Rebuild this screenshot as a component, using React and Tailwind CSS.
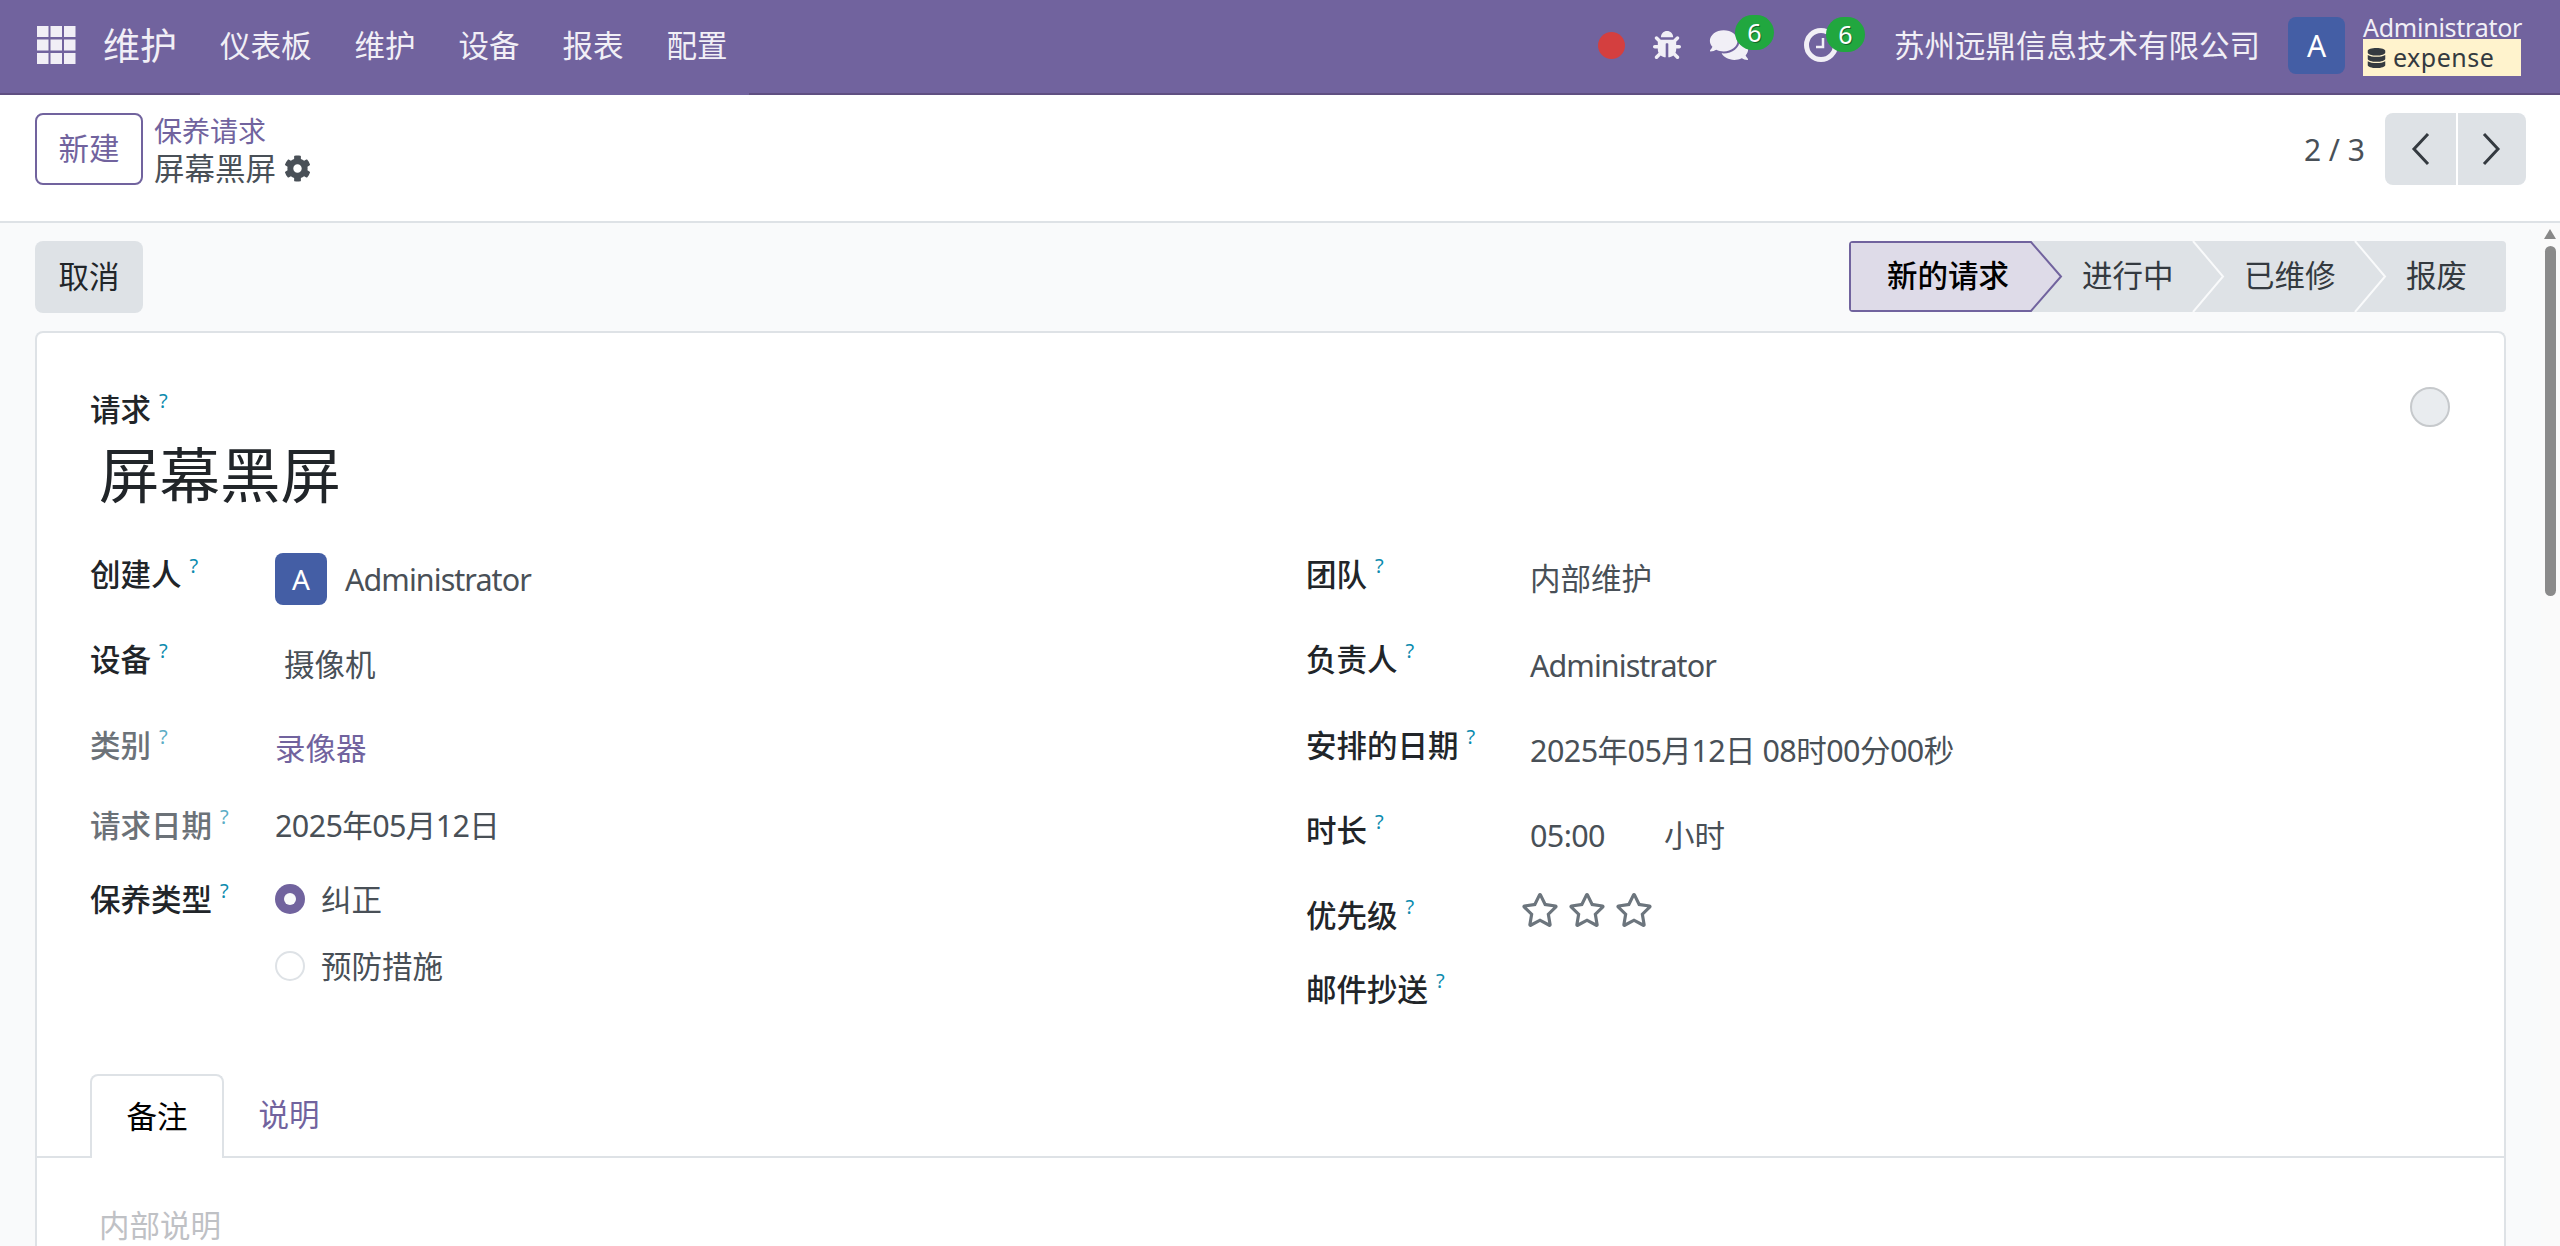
import React from "react";
import { FaBug, FaComments, FaCog, FaDatabase, FaRegStar } from "react-icons/fa";

function Q({ muted }) {
  return <sup className={`relative top-[-13px] ml-[8px] align-baseline text-[20px] font-normal leading-none ${muted ? "text-[#5cadc6]" : "text-[#0c8bae]"}`}>?</sup>;
}

function Label({ children, muted, w }) {
  return (
    <div className={`h-[40px] whitespace-nowrap text-[30.5px] font-medium leading-[40px] ${muted ? "text-[#6c7278]" : "text-[#212529]"} ${w || "w-[185px]"}`}>
      {children}
      <Q muted={muted} />
    </div>
  );
}

function Grid() {
  return (
    <svg width="39" height="38" viewBox="0 0 39 38" fill="#f1eff6" className="mr-[27px]">
      {[0, 13.5, 27].map((y) => [0, 13.5, 27].map((x) => <rect key={x + "-" + y} x={x} y={y} width="11.5" height="11" />))}
    </svg>
  );
}

function Badge({ className }) {
  return (
    <span className={`absolute flex h-[35px] w-[39px] items-center justify-center rounded-full bg-[#21a73f] text-[25px] text-white [text-shadow:1px_1px_0_#14682a] ${className}`}>6</span>
  );
}

function Step({ label, active, width, padLeft }) {
  return (
    <div className={`relative h-full ${width} ${padLeft} text-[30.5px] leading-[69px] ${active ? "font-medium text-black" : "text-[#343a40]"}`}>
      {label}
    </div>
  );
}

const value = "text-[30.5px] leading-[40px]";

export default function App() {
  return (
    <div className="relative flex h-[1246px] w-[2560px] flex-col overflow-hidden bg-[#f9fafb] font-['Noto_Sans','Noto_Sans_CJK_SC',sans-serif] text-[#495057]">
      {/* top bar */}
      <header className="relative flex h-[95px] w-full shrink-0 items-center border-b-[2px] border-[#5f4f81] bg-[#71639e] pb-[3px] pl-[37px] pr-[39px] text-[#f1eff6]">
        <span className="absolute bottom-[-2px] left-[200px] h-[2px] w-[549px] bg-[#71639e]" />
        <Grid />
        <span className="mr-[43px] text-[37px] leading-none">维护</span>
        <nav className="flex gap-[43px] text-[30.5px] leading-none">
          <span>仪表板</span>
          <span>维护</span>
          <span>设备</span>
          <span>报表</span>
          <span>配置</span>
        </nav>
        <div className="ml-auto flex items-center">
          <span className="mr-[28px] h-[27px] w-[27px] rounded-full bg-[#d43f3f]" />
          <FaBug className="mr-[28px] h-[28px] w-[28px] text-[#f1eff6]" />
          <div className="relative mr-[55px] h-[34px] w-[40px]">
            <FaComments className="h-[34px] w-[40px]" />
            <Badge className="left-[26px] top-[-13px]" />
          </div>
          <div className="relative mr-[56px] h-[34px] w-[34px]">
            <svg width="34" height="34" viewBox="0 0 34 34" fill="none" stroke="#f1eff6">
              <circle cx="17" cy="17" r="14.5" strokeWidth="5" />
              <path d="M19 10v9h-7" strokeWidth="2.5" />
            </svg>
            <Badge className="left-[22px] top-[-11px]" />
          </div>
          <span className="mr-[28px] text-[30.5px] leading-none">苏州远鼎信息技术有限公司</span>
          <span className="mr-[18px] flex h-[57px] w-[57px] items-center justify-center rounded-[8px] bg-[#445ea5] text-[30px] text-white">A</span>
          <div className="flex w-[158px] flex-col pt-[1px]">
            <span className="text-[25px] leading-[24px] tracking-[-0.25px]">Administrator</span>
            <span className="flex h-[37px] items-center bg-[#fff3cd] pl-[4px] text-[25px] leading-none tracking-[0.5px] text-[#343a40]">
              <FaDatabase className="mr-[7px] h-[20px] w-[19px]" />
              expense
            </span>
          </div>
        </div>
      </header>

      {/* control panel */}
      <div className="flex h-[128px] w-full shrink-0 items-start border-b-[2px] border-[#dee2e6] bg-white pl-[35px] pr-[34px] pt-[18px]">
        <button className="h-[72px] w-[108px] rounded-[8px] border-[2px] border-[#71639e] text-[30.5px] text-[#71639e]">新建</button>
        <div className="ml-[11px] flex flex-col">
          <span className="h-[36px] text-[28px] leading-[36px] text-[#71639e]">保养请求</span>
          <span className="flex h-[38px] items-center text-[30.5px] leading-[38px] text-[#495057]">
            屏幕黑屏
            <FaCog className="ml-[8px] h-[27px] w-[27px] text-[#495057]" />
          </span>
        </div>
        <div className="ml-auto flex items-center">
          <span className="mr-[20px] text-[30px] text-[#495057]">2 / 3</span>
          <div className="flex h-[72px] overflow-hidden rounded-[8px]">
            <button className="flex h-full w-[71px] items-center justify-center bg-[#dee2e6]">
              <svg width="20" height="34" viewBox="0 0 20 34" fill="none" stroke="#343a40" strokeWidth="3"><path d="M17 2 3 17l14 15" /></svg>
            </button>
            <button className="ml-[2px] flex h-full w-[68px] items-center justify-center bg-[#dee2e6]">
              <svg width="20" height="34" viewBox="0 0 20 34" fill="none" stroke="#343a40" strokeWidth="3"><path d="m2 2 14 15L2 32" /></svg>
            </button>
          </div>
        </div>
      </div>

      {/* content */}
      <div className="flex min-h-0 flex-1 flex-col pl-[35px] pr-[54px] pt-[18px]">
        <div className="flex h-[72px] shrink-0 items-start justify-between">
          <button className="h-[72px] w-[108px] rounded-[8px] bg-[#dee2e6] text-[30.5px] text-[#212529]">取消</button>
          <div className="relative flex h-[71px] w-[657px] overflow-hidden rounded-[4px] bg-[#dee2e6]">
            <svg className="absolute left-0 top-0" width="657" height="71" viewBox="0 0 657 71" fill="none">
              <path d="M1 1H182L212 35.5 182 70H1Z" fill="#dedbe8" stroke="#71639e" strokeWidth="2" />
              <path d="M344 0 374 35.5 344 71" stroke="#f9fafb" strokeWidth="2" />
              <path d="M506 0 536 35.5 506 71" stroke="#f9fafb" strokeWidth="2" />
            </svg>
            <Step label="新的请求" active width="w-[231px]" padLeft="pl-[38px]" />
            <Step label="进行中" width="w-[164px]" padLeft="pl-[2px]" />
            <Step label="已维修" width="w-[162px]" padLeft="pl-[0px]" />
            <Step label="报废" width="w-[100px]" padLeft="pl-[0px]" />
          </div>
        </div>

        <div className="relative mt-[18px] flex flex-1 flex-col rounded-t-[8px] border-[2px] border-b-0 border-[#dee2e6] bg-white pt-[56px]">
          <span className="absolute right-[54px] top-[54px] h-[40px] w-[40px] rounded-full border-[2px] border-[#c6c9cc] bg-[#e9ecef]" />
          <div className="pl-[53px]">
            <Label>请求</Label>
            <div className="ml-[9px] mt-[10px] text-[60.5px] leading-[72px] text-[#212529]">屏幕黑屏</div>
          </div>

          <div className="mt-[43px] flex pl-[53px]">
            <div className="flex w-[1216px] flex-col">
              <div className="flex h-[85px]">
                <Label>创建人</Label>
                <div className="flex items-start">
                  <span className="mt-[-1px] flex h-[52px] w-[52px] items-center justify-center rounded-[8px] bg-[#445ea5] text-[28px] text-white">A</span>
                  <span className={`ml-[18px] mt-[5px] ${value} tracking-[-0.95px]`}>Administrator</span>
                </div>
              </div>
              <div className="flex h-[86px]">
                <Label>设备</Label>
                <span className={`ml-[9px] mt-[5px] ${value}`}>摄像机</span>
              </div>
              <div className="flex h-[80px]">
                <Label muted>类别</Label>
                <span className={`mt-[3px] ${value} text-[#71639e]`}>录像器</span>
              </div>
              <div className="flex h-[74px]">
                <Label muted>请求日期</Label>
                <span className={`${value} tracking-[-0.62px]`}>2025年05月12日</span>
              </div>
              <div className="flex h-[67px]">
                <Label>保养类型</Label>
                <div className="flex items-center self-start">
                  <span className="flex h-[30px] w-[30px] items-center justify-center rounded-full bg-[#71639e]">
                    <span className="h-[12px] w-[12px] rounded-full bg-[#f9fafb]" />
                  </span>
                  <span className={`ml-[16px] ${value}`}>纠正</span>
                </div>
              </div>
              <div className="flex">
                <div className="w-[185px]" />
                <div className="flex items-center">
                  <span className="h-[30px] w-[30px] rounded-full border-[2px] border-[#dee2e6]" />
                  <span className={`ml-[16px] ${value}`}>预防措施</span>
                </div>
              </div>
            </div>

            <div className="flex flex-col">
              <div className="flex h-[85px]">
                <Label w="w-[224px]">团队</Label>
                <span className={`mt-[4px] ${value}`}>内部维护</span>
              </div>
              <div className="flex h-[86px]">
                <Label w="w-[224px]">负责人</Label>
                <span className={`mt-[6px] ${value} tracking-[-0.95px]`}>Administrator</span>
              </div>
              <div className="flex h-[85px]">
                <Label w="w-[224px]">安排的日期</Label>
                <span className={`mt-[5px] ${value} tracking-[-0.55px]`}>2025年05月12日 08时00分00秒</span>
              </div>
              <div className="flex h-[85px]">
                <Label w="w-[224px]">时长</Label>
                <span className={`mt-[5px] w-[134px] ${value} tracking-[-0.6px]`}>05:00</span>
                <span className={`mt-[5px] ${value}`}>小时</span>
              </div>
              <div className="flex h-[74px]">
                <Label w="w-[215px]">优先级</Label>
                <div className="flex gap-[9px] text-[#6c757d]">
                  <FaRegStar className="mt-[-4px] h-[38px] w-[38px]" />
                  <FaRegStar className="mt-[-4px] h-[38px] w-[38px]" />
                  <FaRegStar className="mt-[-4px] h-[38px] w-[38px]" />
                </div>
              </div>
              <Label>邮件抄送</Label>
            </div>
          </div>

          <div className="mt-[65px] flex h-[84px] shrink-0 border-b-[2px] border-[#dee2e6] pl-[53px]">
            <div className="z-10 mb-[-2px] flex w-[134px] items-center justify-center rounded-t-[8px] border-[2px] border-b-0 border-[#dee2e6] bg-white text-[30.5px] text-black">备注</div>
            <div className="flex w-[130px] items-center justify-center text-[30.5px] text-[#71639e]">说明</div>
          </div>
          <div className="pl-[62px] pt-[47px] text-[30.5px] leading-[40px] text-[#bfc1c5]">内部说明</div>
        </div>
      </div>

      {/* scrollbar */}
      <div className="absolute bottom-0 right-0 top-[224px] w-[19px] bg-[#fafafa] pl-[3px]">
        <div className="mt-[5px] h-0 w-0 border-x-[6.5px] border-b-[10px] border-x-transparent border-b-[#888]" />
        <div className="ml-[1px] mt-[7px] h-[350px] w-[11px] rounded-full bg-[#8a8a8a]" />
      </div>
    </div>
  );
}
